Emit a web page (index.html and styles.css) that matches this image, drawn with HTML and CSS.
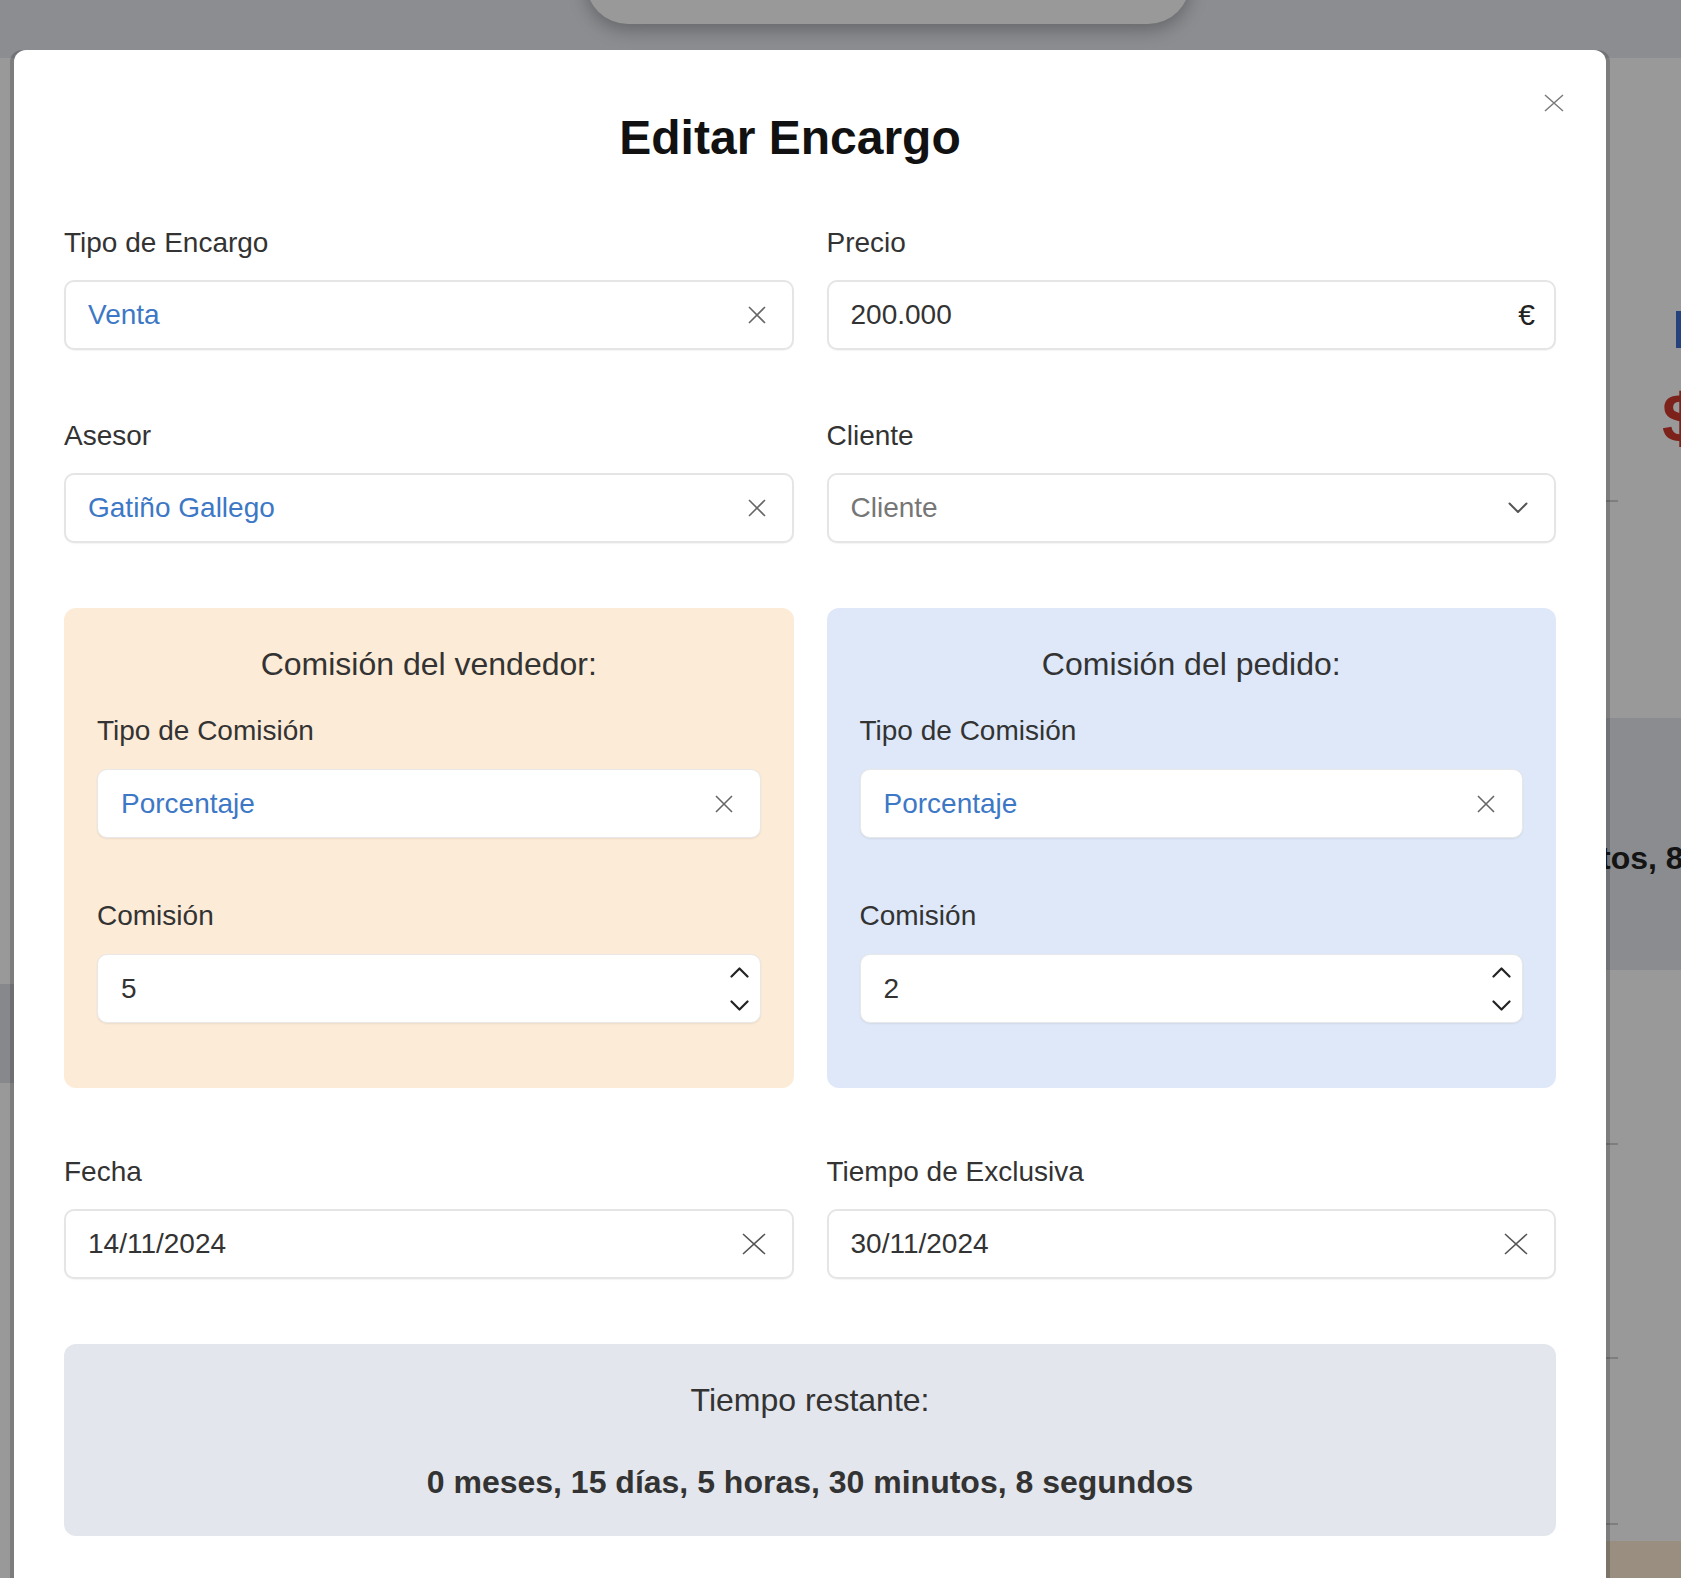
FILE: index.html
```html
<!DOCTYPE html>
<html lang="es">
<head>
<meta charset="utf-8">
<title>Editar Encargo</title>
<link rel="stylesheet" href="styles.css">
</head>
<body>
<div class="page">
  <div class="nav-pill"></div>
  <div class="card">
    <div class="bg-blue-mark"></div>
    <div class="bg-dollar">$</div>
    <div class="bg-rule bg-rule--1"></div>
    <div class="bg-band"><span class="bg-band-text">tos, 8 segundos</span></div>
    <div class="bg-band-left"></div>
    <div class="bg-rule bg-rule--2"></div>
    <div class="bg-rule bg-rule--3"></div>
    <div class="bg-rule bg-rule--4"></div>
    <div class="bg-tan"></div>
  </div>
</div>
<div class="overlay"></div>

<div class="modal">
  <button class="modal-close" aria-label="Cerrar">
    <svg width="20" height="18" viewBox="0 0 20 18"><path d="M1 1 L19 17 M19 1 L1 17" stroke="#7a7a7a" stroke-width="1.5" fill="none"/></svg>
  </button>
  <h2 class="modal-title">Editar Encargo</h2>

  <div class="form-grid">
    <div class="field">
      <label class="field-label">Tipo de Encargo</label>
      <div class="control">
        <span class="control-value is-selected">Venta</span>
        <svg class="icon-clear" width="18" height="18" viewBox="0 0 18 18"><path d="M1 1 L17 17 M17 1 L1 17" stroke="#666" stroke-width="1.6" fill="none"/></svg>
      </div>
    </div>
    <div class="field">
      <label class="field-label">Precio</label>
      <div class="control">
        <span class="control-value">200.000</span>
        <span class="control-suffix">€</span>
      </div>
    </div>

    <div class="field field--row2">
      <label class="field-label">Asesor</label>
      <div class="control">
        <span class="control-value is-selected">Gatiño Gallego</span>
        <svg class="icon-clear" width="18" height="18" viewBox="0 0 18 18"><path d="M1 1 L17 17 M17 1 L1 17" stroke="#666" stroke-width="1.6" fill="none"/></svg>
      </div>
    </div>
    <div class="field field--row2">
      <label class="field-label">Cliente</label>
      <div class="control">
        <span class="control-value is-placeholder">Cliente</span>
        <svg class="icon-chevron" width="20" height="12" viewBox="0 0 20 12"><path d="M1.5 1.5 L10 10 L18.5 1.5" stroke="#555" stroke-width="2" fill="none" stroke-linecap="round" stroke-linejoin="round"/></svg>
      </div>
    </div>

    <div class="commission commission--seller">
      <h3 class="commission-title">Comisión del vendedor:</h3>
      <div class="field field--inner">
        <label class="field-label">Tipo de Comisión</label>
        <div class="control control--inner">
          <span class="control-value is-selected">Porcentaje</span>
          <svg class="icon-clear" width="18" height="18" viewBox="0 0 18 18"><path d="M1 1 L17 17 M17 1 L1 17" stroke="#666" stroke-width="1.6" fill="none"/></svg>
        </div>
      </div>
      <div class="field field--inner">
        <label class="field-label">Comisión</label>
        <div class="control control--inner">
          <span class="control-value">5</span>
          <span class="spinner">
            <svg width="19" height="11" viewBox="0 0 19 11"><path d="M1.5 9.5 L9.5 1.5 L17.5 9.5" stroke="#222" stroke-width="2.2" fill="none" stroke-linecap="round" stroke-linejoin="round"/></svg>
            <svg width="19" height="11" viewBox="0 0 19 11"><path d="M1.5 1.5 L9.5 9.5 L17.5 1.5" stroke="#222" stroke-width="2.2" fill="none" stroke-linecap="round" stroke-linejoin="round"/></svg>
          </span>
        </div>
      </div>
    </div>

    <div class="commission commission--order">
      <h3 class="commission-title">Comisión del pedido:</h3>
      <div class="field field--inner">
        <label class="field-label">Tipo de Comisión</label>
        <div class="control control--inner">
          <span class="control-value is-selected">Porcentaje</span>
          <svg class="icon-clear" width="18" height="18" viewBox="0 0 18 18"><path d="M1 1 L17 17 M17 1 L1 17" stroke="#666" stroke-width="1.6" fill="none"/></svg>
        </div>
      </div>
      <div class="field field--inner">
        <label class="field-label">Comisión</label>
        <div class="control control--inner">
          <span class="control-value">2</span>
          <span class="spinner">
            <svg width="19" height="11" viewBox="0 0 19 11"><path d="M1.5 9.5 L9.5 1.5 L17.5 9.5" stroke="#222" stroke-width="2.2" fill="none" stroke-linecap="round" stroke-linejoin="round"/></svg>
            <svg width="19" height="11" viewBox="0 0 19 11"><path d="M1.5 1.5 L9.5 9.5 L17.5 1.5" stroke="#222" stroke-width="2.2" fill="none" stroke-linecap="round" stroke-linejoin="round"/></svg>
          </span>
        </div>
      </div>
    </div>

    <div class="field">
      <label class="field-label">Fecha</label>
      <div class="control">
        <span class="control-value">14/11/2024</span>
        <svg class="icon-clear icon-clear--date" width="24" height="22" viewBox="0 0 24 22"><path d="M1 1 L23 21 M23 1 L1 21" stroke="#555" stroke-width="1.6" fill="none"/></svg>
      </div>
    </div>
    <div class="field">
      <label class="field-label">Tiempo de Exclusiva</label>
      <div class="control">
        <span class="control-value">30/11/2024</span>
        <svg class="icon-clear icon-clear--date" width="24" height="22" viewBox="0 0 24 22"><path d="M1 1 L23 21 M23 1 L1 21" stroke="#555" stroke-width="1.6" fill="none"/></svg>
      </div>
    </div>
  </div>

  <div class="remaining">
    <p class="remaining-title">Tiempo restante:</p>
    <p class="remaining-value">0 meses, 15 días, 5 horas, 30 minutos, 8 segundos</p>
  </div>
</div>
</body>
</html>
```

FILE: styles.css
```css
* { box-sizing: border-box; }

html, body {
  margin: 0;
  padding: 0;
}

body {
  width: 1681px;
  height: 1578px;
  overflow: hidden;
  position: relative;
  font-family: "Liberation Sans", Arial, Helvetica, sans-serif;
  color: #333;
  background: #e8ebf1;
}

/* ---------- underlying page (dimmed) ---------- */
.page {
  position: absolute;
  inset: 0;
}

.nav-pill {
  position: absolute;
  left: 586px;
  top: -40px;
  width: 604px;
  height: 64px;
  background: #fff;
  border-radius: 0 0 42px 42px;
  box-shadow: 0 6px 18px rgba(0, 0, 0, 0.28);
}

.card {
  position: absolute;
  left: -20px;
  top: 58px;
  right: -20px;
  bottom: 0;
  background: #ffffff;
}

.bg-blue-mark {
  position: absolute;
  left: 1696px;
  top: 253px;
  width: 14px;
  height: 37px;
  background: #3f6fd0;
}

.bg-dollar {
  position: absolute;
  left: 1682px;
  top: 326px;
  font-size: 68px;
  font-weight: 700;
  line-height: 1;
  color: #d0392e;
}

.bg-band {
  position: absolute;
  left: 1000px;
  top: 660px;
  width: 800px;
  height: 252px;
  background: #e6e9f0;
}

.bg-band-text {
  position: absolute;
  left: 620px;
  top: 122px;
  font-size: 32px;
  font-weight: 700;
  white-space: nowrap;
  color: #222;
}

.bg-band-left {
  position: absolute;
  left: 0;
  top: 926px;
  width: 60px;
  height: 99px;
  background: #e0e3ea;
}

.bg-rule {
  position: absolute;
  left: 1626px;
  width: 12px;
  height: 2px;
  background: #d2d2d2;
}
.bg-rule--1 { top: 442px; }
.bg-rule--2 { top: 1085px; }
.bg-rule--3 { top: 1299px; }
.bg-rule--4 { top: 1465px; }

.bg-tan {
  position: absolute;
  left: 1620px;
  top: 1483px;
  width: 200px;
  height: 100px;
  background: #ffedd5;
}

.overlay {
  position: absolute;
  inset: 0;
  background: rgba(0, 0, 0, 0.4);
}

/* ---------- modal ---------- */
.modal {
  position: absolute;
  left: 14px;
  top: 50px;
  width: 1592px;
  height: 1600px;
  background: #fff;
  border-radius: 12px 12px 0 0;
  padding: 60px 50px 0;
  box-shadow: -4px 0 0 rgba(0, 0, 0, 0.18), 4px 0 0 rgba(0, 0, 0, 0.18);
}

.modal-close {
  position: absolute;
  top: 44px;
  right: 42px;
  width: 20px;
  height: 18px;
  padding: 0;
  border: 0;
  background: none;
  display: flex;
}

.modal-title {
  margin: 0;
  padding-right: 40px;
  font-size: 48px;
  line-height: 56px;
  font-weight: 700;
  color: #111;
  text-align: center;
}

.form-grid {
  margin-top: 60px;
  display: grid;
  grid-template-columns: 1fr 1fr;
  column-gap: 33px;
  row-gap: 67px;
}

.field {
  display: flex;
  flex-direction: column;
}

.field--row2 {
  margin-top: 2px;
  margin-bottom: -2px;
}

.field-label {
  font-size: 28px;
  line-height: 34px;
  color: #333;
  margin-bottom: 20px;
}

.control {
  height: 70px;
  display: flex;
  align-items: center;
  padding: 0 22px;
  background: #fff;
  border: 2px solid #e5e5e5;
  border-radius: 10px;
  box-shadow: 0 1px 1px rgba(0, 0, 0, 0.04);
  font-size: 28px;
}

.control-value {
  flex: 1;
  color: #333;
  white-space: nowrap;
}

.control-value.is-selected { color: #3d78c6; }
.control-value.is-placeholder { color: #767676; }

.control-suffix {
  margin-right: -3px;
  font-size: 30px;
  color: #222;
}

.icon-clear { margin-right: 4px; flex: none; }
.icon-clear--date { margin-right: 4px; }
.icon-chevron { margin-right: 4px; flex: none; }

/* ---------- commission boxes ---------- */
.commission {
  border-radius: 12px;
  padding: 37px 33px 65px;
  display: flex;
  flex-direction: column;
}

.commission--seller { background: #fcebd7; }
.commission--order { background: #dee8f9; }

.commission-title {
  margin: 0 0 31px;
  font-size: 32px;
  line-height: 38px;
  font-weight: 400;
  text-align: center;
  color: #333;
}

.field--inner + .field--inner { margin-top: 61px; }
.field--inner .field-label { margin-bottom: 21px; }

.control--inner {
  height: 69px;
  border: 1px solid #e8e8e8;
  box-shadow: 0 1px 2px rgba(0, 0, 0, 0.07);
  padding: 0 23px;
}

.control--inner .icon-clear { margin-right: 4px; }

.spinner {
  display: flex;
  flex-direction: column;
  gap: 22px;
  margin-right: -12px;
}

/* ---------- remaining time ---------- */
.remaining {
  margin-top: 65px;
  background: #e3e6ec;
  border-radius: 12px;
  padding: 37px 20px 35px;
  text-align: center;
}

.remaining-title {
  margin: 0;
  font-size: 32px;
  line-height: 38px;
  color: #333;
}

.remaining-value {
  margin: 44px 0 0;
  font-size: 32px;
  line-height: 38px;
  font-weight: 700;
  color: #333;
}
```
